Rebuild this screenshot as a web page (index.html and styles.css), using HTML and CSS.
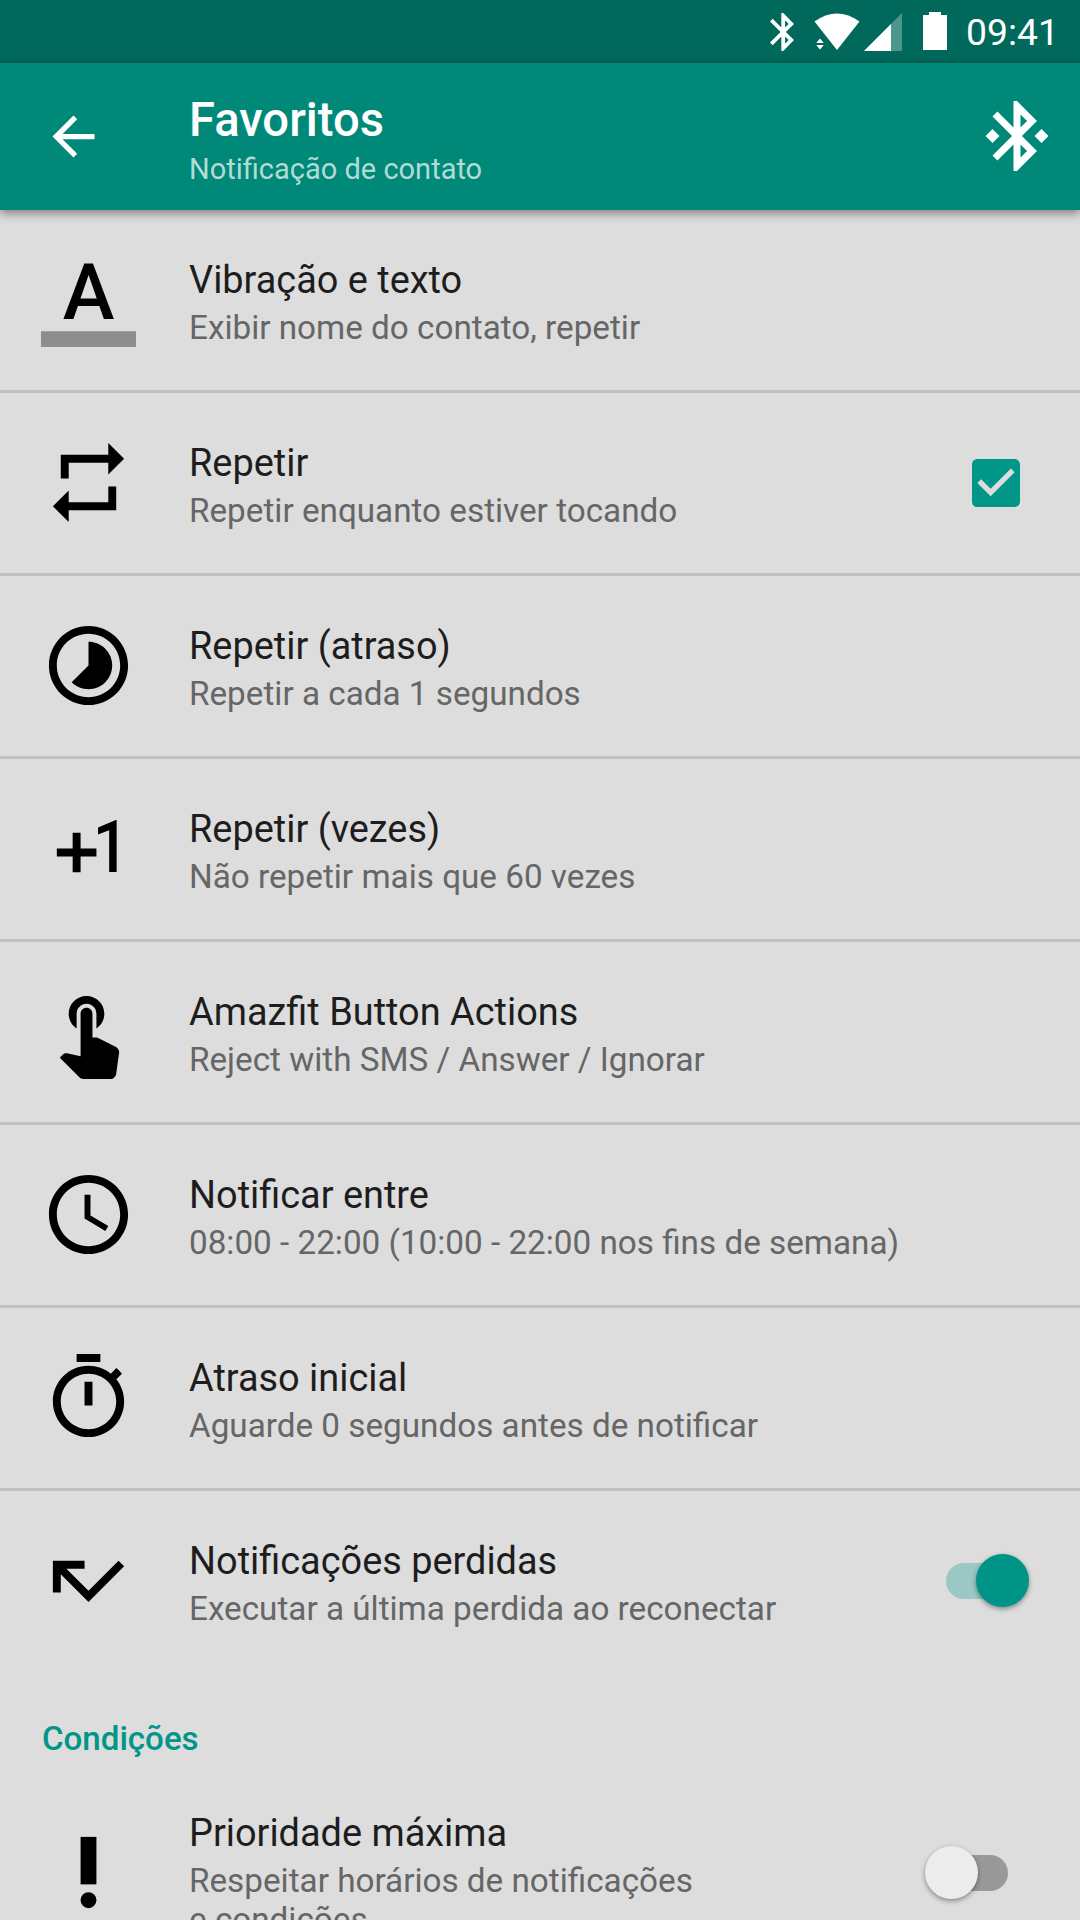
FILE: index.html
```html
<!DOCTYPE html>
<html lang="pt-BR">
<head>
  <meta charset="UTF-8">
  <title>Favoritos</title>
  <link rel="stylesheet" href="styles.css">
</head>
<body>

  <div class="statusbar">
    <svg class="st-bluetooth" viewBox="5 2 12.71 20"><path d="M17.71 7.71L12 2h-1v7.59L6.41 5 5 6.41 10.59 12 5 17.59 6.41 19 11 14.41V22h1l5.71-5.71-4.3-4.29 4.3-4.29zM13 5.83l1.88 1.88L13 9.59V5.83zm1.88 10.46L13 18.17v-3.76l1.88 1.88z"/></svg>
    <svg class="st-wifi" viewBox="0 0 46 38"><path d="M.5 8.5Q23-7.5 45.5 8.5L23 37z"/><path d="M2.2 30L6 25.5 9.8 30zM2.2 32L6 36.500 9.800 32z"/></svg>
    <svg class="st-signal" viewBox="0 0 38 38"><path opacity=".3" d="M0 38L38 0v38z"/><path d="M0 38L27 11v27z"/></svg>
    <svg class="st-battery" viewBox="0 0 24 38"><path d="M6 0h12v3h6v35H0V3h6z"/></svg>
    <span class="clock">09:41</span>
  </div>

  <header class="appbar">
    <svg class="back" viewBox="0 0 24 24"><path d="M20 11H7.83l5.59-5.59L12 4l-8 8 8 8 1.41-1.41L7.83 13H20v-2z"/></svg>
    <div class="heading">
      <h1>Favoritos</h1>
      <p>Notificação de contato</p>
    </div>
    <svg class="connected" viewBox="0 0 24 24"><path d="M7 12l-2-2-2 2 2 2 2-2zm10.71-4.29L12 2h-1v7.59L6.41 5 5 6.41 10.59 12 5 17.59 6.41 19 11 14.41V22h1l5.71-5.71-4.3-4.29 4.3-4.29zM13 5.83l1.88 1.88L13 9.59V5.83zm1.88 10.46L13 18.17v-3.76l1.88 1.88zM19 10l-2 2 2 2 2-2-2-2z"/></svg>
  </header>

  <main class="list">
    <div class="row">
      <svg class="icon" viewBox="0 0 24 24"><text class="glyph" x="12" y="17" text-anchor="middle" font-size="19.7">A</text><path opacity=".36" d="M0 20h24v4H0z"/></svg>
      <div class="text">
        <div class="title">Vibração e texto</div>
        <div class="desc">Exibir nome do contato, repetir</div>
      </div>
    </div>

    <div class="row">
      <svg class="icon" viewBox="0 0 24 24"><path d="M7 7h10v3l4-4-4-4v3H5v6h2V7zm10 10H7v-3l-4 4 4 4v-3h12v-6h-2v4z"/></svg>
      <div class="text">
        <div class="title">Repetir</div>
        <div class="desc">Repetir enquanto estiver tocando</div>
      </div>
      <svg class="checkbox" viewBox="0 0 24 24"><path d="M19 3H5c-1.11 0-2 .9-2 2v14c0 1.1.89 2 2 2h14c1.11 0 2-.9 2-2V5c0-1.1-.89-2-2-2zm-9 14l-5-5 1.41-1.41L10 14.17l7.59-7.59L19 8l-9 9z"/></svg>
    </div>

    <div class="row">
      <svg class="icon" viewBox="0 0 24 24"><path d="M16.24 7.76C15.07 6.59 13.54 6 12 6v6l-4.24 4.24c2.34 2.34 6.14 2.34 8.49 0 2.34-2.34 2.34-6.14-.01-8.48zM12 2C6.48 2 2 6.48 2 12s4.48 10 10 10 10-4.48 10-10S17.52 2 12 2zm0 18c-4.42 0-8-3.58-8-8s3.58-8 8-8 8 3.58 8 8-3.58 8-8 8z"/></svg>
      <div class="text">
        <div class="title">Repetir (atraso)</div>
        <div class="desc">Repetir a cada 1 segundos</div>
      </div>
    </div>

    <div class="row">
      <svg class="icon" viewBox="0 0 24 24"><path d="M10 8H8v4H4v2h4v4h2v-4h4v-2h-4z"/><text class="glyph" transform="translate(13.1 18) scale(.88 1)" font-size="18.3">1</text></svg>
      <div class="text">
        <div class="title">Repetir (vezes)</div>
        <div class="desc">Não repetir mais que 60 vezes</div>
      </div>
    </div>

    <div class="row">
      <svg class="icon" viewBox="0 0 24 24"><path d="M9 11.24V7.5C9 6.12 10.12 5 11.5 5S14 6.12 14 7.5v3.74c1.21-.81 2-2.18 2-3.74C16 5.01 13.99 3 11.5 3S7 5.01 7 7.5c0 1.56.79 2.93 2 3.74zm9.84 4.63l-4.54-2.26c-.17-.07-.35-.11-.54-.11H13v-6c0-.83-.67-1.5-1.5-1.5S10 6.67 10 7.5v10.74l-3.43-.72c-.08-.01-.15-.03-.24-.03-.31 0-.59.13-.79.33l-.79.8 4.94 4.94c.27.27.65.44 1.06.44h6.79c.75 0 1.33-.55 1.44-1.28l.75-5.27c.01-.07.02-.14.02-.2 0-.62-.38-1.16-.91-1.38z"/></svg>
      <div class="text">
        <div class="title">Amazfit Button Actions</div>
        <div class="desc">Reject with SMS / Answer / Ignorar</div>
      </div>
    </div>

    <div class="row">
      <svg class="icon" viewBox="0 0 24 24"><path d="M11.99 2C6.47 2 2 6.48 2 12s4.47 10 9.99 10C17.52 22 22 17.52 22 12S17.52 2 11.99 2zM12 20c-4.42 0-8-3.58-8-8s3.58-8 8-8 8 3.58 8 8-3.58 8-8 8zm.5-13H11v6l5.25 3.15.75-1.23-4.5-2.67z"/></svg>
      <div class="text">
        <div class="title">Notificar entre</div>
        <div class="desc">08:00 - 22:00 (10:00 - 22:00 nos fins de semana)</div>
      </div>
    </div>

    <div class="row">
      <svg class="icon" viewBox="0 0 24 24"><path d="M15 1H9v2h6V1zm-4 13h2V8h-2v6zm8.03-6.61l1.42-1.42c-.43-.51-.9-.99-1.41-1.41l-1.42 1.42C16.07 4.74 14.12 4 12 4c-4.97 0-9 4.03-9 9s4.02 9 9 9 9-4.03 9-9c0-2.12-.74-4.07-1.97-5.61zM12 20c-3.87 0-7-3.13-7-7s3.13-7 7-7 7 3.13 7 7-3.13 7-7 7z"/></svg>
      <div class="text">
        <div class="title">Atraso inicial</div>
        <div class="desc">Aguarde 0 segundos antes de notificar</div>
      </div>
    </div>

    <div class="row last">
      <svg class="icon" viewBox="0 0 24 24"><path d="M19.59 7L12 14.59 6.41 9H11V7H3v8h2v-4.59l7 7 9-9z"/></svg>
      <div class="text">
        <div class="title">Notificações perdidas</div>
        <div class="desc">Executar a última perdida ao reconectar</div>
      </div>
      <div class="switch on"><span class="thumb"></span></div>
    </div>

    <h2 class="section">Condições</h2>

    <div class="row last">
      <svg class="icon" viewBox="0 0 24 24"><circle cx="12" cy="19" r="2"/><path d="M10 3h4v12h-4z"/></svg>
      <div class="text">
        <div class="title">Prioridade máxima</div>
        <div class="desc">Respeitar horários de notificações<br>e condições</div>
      </div>
      <div class="switch"><span class="thumb"></span></div>
    </div>
  </main>

</body>
</html>
```
FILE: styles.css
```css
* {
  box-sizing: border-box;
}

body {
  margin: 0;
  height: 1920px;
  overflow: hidden;
  background-color: #ddd;
  font-family: Roboto, sans-serif;
  color: #1d1d1d;
}

svg {
  display: block;
  flex: none;
}

/* status bar */
.statusbar {
  display: flex;
  justify-content: flex-end;
  align-items: center;
  height: 63px;
  padding-right: 25px;
  background-color: #00695c;
  color: #fff;
  fill: #fff;
}

.st-bluetooth {
  width: 24px;
  height: 38px;
  margin-right: 20px;
}

.st-wifi {
  width: 46px;
  height: 38px;
  margin-right: 4px;
}

.st-signal {
  width: 38px;
  height: 38px;
  margin-right: 21px;
}

.st-battery {
  width: 24px;
  height: 38px;
  margin-bottom: 1px;
}

.clock {
  width: 89px;
  margin-left: 19px;
  padding-top: 2px;
  font-size: 37.3px;
  line-height: 43px;
  white-space: nowrap;
}

/* app bar */
.appbar {
  position: relative;
  display: flex;
  align-items: center;
  height: 147px;
  padding: 0 21px 0 42px;
  background-color: #008979;
  color: #fff;
  fill: #fff;
  box-shadow: 0 3px 10px rgba(0, 0, 0, 0.45);
}

.back {
  width: 63px;
  height: 63px;
}

.heading {
  flex: 1;
  margin-left: 84px;
  padding-top: 4px;
}

.heading h1 {
  margin: 0;
  font-size: 47.2px;
  font-weight: 500;
  line-height: 56px;
}

.heading p {
  margin: 4px 0 0;
  font-size: 29px;
  line-height: 34px;
  color: #b2dbd6;
}

.connected {
  width: 84px;
  height: 84px;
  margin-bottom: 1px;
}

/* settings list */
.row {
  display: flex;
  align-items: center;
  min-height: 183px;
  padding: 0 51px 0 41px;
  border-bottom: 3px solid #c0c0c0;
}

.row.last {
  min-height: 180px;
  border-bottom: none;
}

.icon {
  width: 95px;
  height: 95px;
  margin-bottom: 1px;
  fill: #000;
}

.glyph {
  font-family: Roboto, sans-serif;
  font-weight: 500;
}

.text {
  flex: 1;
  margin-left: 53px;
  padding: 49px 0 43px;
}

.title {
  font-size: 37.9px;
  line-height: 43px;
}

.desc {
  margin-top: 6px;
  font-size: 33.25px;
  line-height: 39px;
  color: #666;
  white-space: nowrap;
}

.section {
  height: 92px;
  margin: 0;
  padding: 49px 42px 0;
  font-size: 33.1px;
  font-weight: 500;
  line-height: 38px;
  color: #009688;
}

.checkbox {
  width: 64px;
  height: 64px;
  margin-right: 1px;
  fill: #009688;
}

.switch {
  position: relative;
  display: flex;
  width: 104px;
  height: 53px;
  margin-bottom: 1px;
}

.switch::before {
  content: "";
  position: absolute;
  left: 21px;
  top: 9px;
  width: 62px;
  height: 36px;
  border-radius: 18px;
  background-color: #999;
}

.thumb {
  position: relative;
  width: 53px;
  height: 53px;
  border-radius: 50%;
  background-color: #ececec;
  box-shadow: 0 2px 5px rgba(0, 0, 0, 0.4);
}

.switch.on {
  justify-content: flex-end;
}

.switch.on::before {
  background-color: #9bc8c4;
}

.switch.on .thumb {
  background-color: #009486;
}
```
